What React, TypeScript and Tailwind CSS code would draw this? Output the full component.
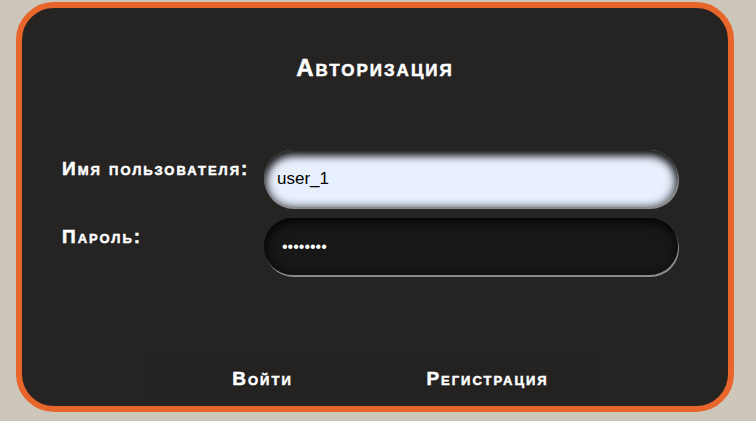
import React from 'react';

const font = "font-['Liberation_Sans',Arial,sans-serif]";
const heading = "font-['Liberation_Sans',Arial,sans-serif] font-bold [font-variant:small-caps] tracking-[2px] [-webkit-text-stroke:0.5px_white]";

const LoginCard = () => {
  return (
    <div className={`ml-[16px] mt-[2px] w-[718px] h-[410px] border-[6px] border-[#e8652b] rounded-[38px] bg-[#262423] flex flex-col items-center text-white ${font}`}>
      {/* Title */}
      <h1 className={`mt-[46px] text-[24px] leading-[28px] ${heading}`}>
        Авторизация
      </h1>

      {/* Form */}
      <div className="mt-[68px] w-full pl-[40px] flex flex-col gap-[11px]">
        <div className="flex items-start">
          <label className={`w-[202px] pt-[8px] text-[19px] leading-[22px] ${heading}`}>
            Имя пользователя:
          </label>
          <input
            type="text"
            defaultValue="user_1"
            readOnly
            className="w-[414px] h-[57px] rounded-full px-[13px] text-[17px] text-black bg-[#e8f0fe] outline-none shadow-[inset_0_6px_9px_rgba(0,0,0,0.85),inset_4px_0_8px_rgba(0,0,0,0.35),inset_-4px_0_8px_rgba(0,0,0,0.35),1px_2px_0_#8a8a8a]"
          />
        </div>
        <div className="flex items-start">
          <label className={`w-[202px] pt-[8px] text-[19px] leading-[22px] ${heading}`}>
            Пароль:
          </label>
          <input
            type="password"
            defaultValue="12345678"
            readOnly
            className="w-[414px] h-[57px] rounded-full px-[18px] text-[16px] text-white bg-[#171717] outline-none shadow-[inset_0_5px_8px_rgba(0,0,0,0.7),inset_4px_0_8px_rgba(0,0,0,0.3),1px_2px_0_#8a8a8a]"
          />
        </div>
      </div>

      {/* Buttons */}
      <div className="mt-auto flex w-[450px] h-[54px]">
        <button className={`w-[225px] h-full bg-[#242221] text-[19px] ${heading}`}>
          Войти
        </button>
        <button className={`w-[225px] h-full bg-[#242221] text-[19px] ${heading}`}>
          Регистрация
        </button>
      </div>
    </div>
  );
};

const App = () => {
  return (
    <div className="w-[756px] h-[421px] bg-[#cdc6bb] overflow-hidden">
      <LoginCard />
    </div>
  );
};

export default App;
